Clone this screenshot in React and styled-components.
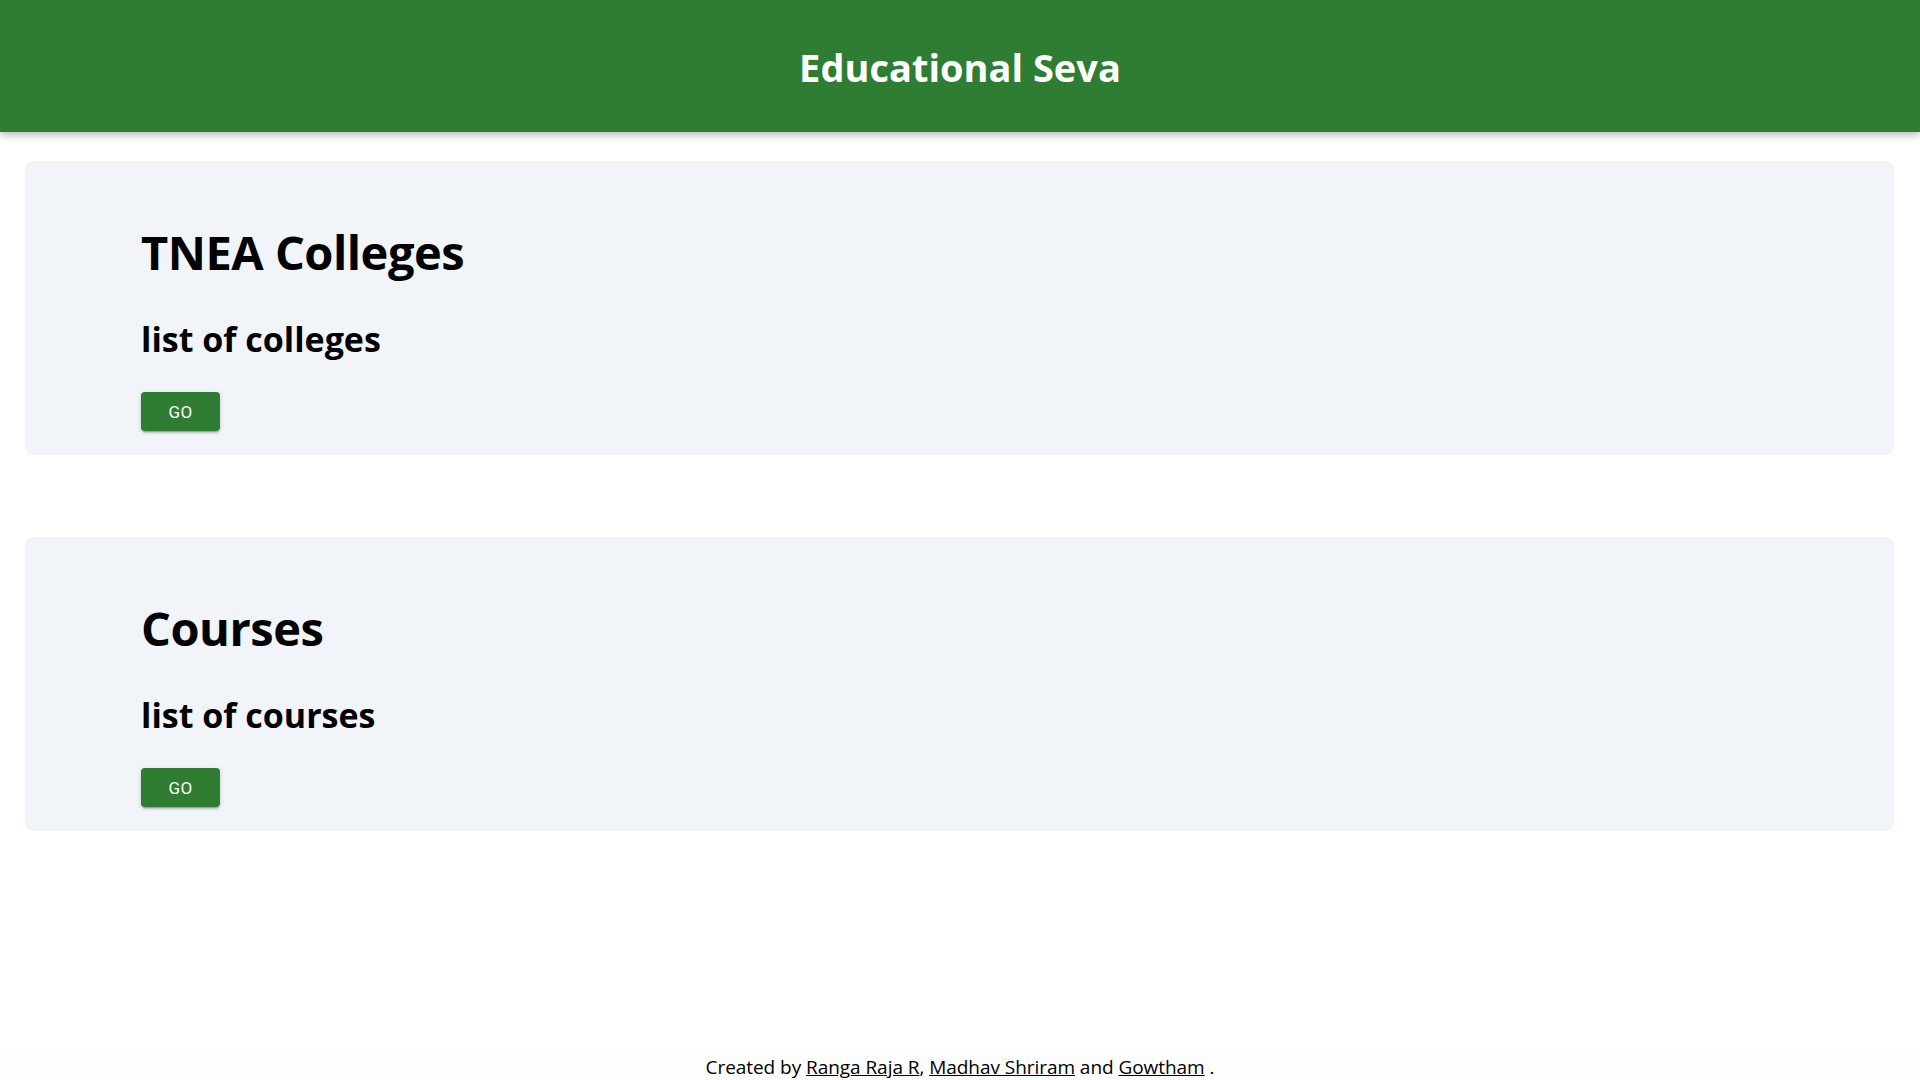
import React from "react";
import styled, { createGlobalStyle } from "styled-components";

const Global = createGlobalStyle`
  html, body { margin: 0; padding: 0; background: #ffffff; }
  body { font-family: "Open Sans", "Noto Sans", sans-serif; color: #000; }
  * { box-sizing: border-box; }
`;

const Page = styled.div`
  min-height: 100vh;
  display: flex;
  flex-direction: column;
`;

const Header = styled.header`
  height: 132px;
  background: #2e7d32;
  display: flex;
  align-items: center;
  justify-content: center;
  box-shadow: 0 3px 8px rgba(0, 0, 0, 0.28);
  position: relative;
  z-index: 1;
`;

const Title = styled.h1`
  margin: 0;
  color: #ffffff;
  font-size: 38px;
  font-weight: 700;
  letter-spacing: 0px;
  line-height: 46px;
  padding-top: 2px;
`;

const Main = styled.main`
  flex: 1;
  display: flex;
  flex-direction: column;
  gap: 82px;
  padding: 29px 26px 0 25px;
`;

const Card = styled.section`
  background: #f1f4f9;
  border-radius: 8px;
  padding: 62px 24px 24px 116px;
  display: flex;
  flex-direction: column;
  align-items: flex-start;
`;

const CardTitle = styled.h2`
  margin: 0;
  font-size: 47px;
  font-weight: 700;
  letter-spacing: -0.5px;
  line-height: 58px;
`;

const CardSub = styled.h3`
  margin: 38px 0 0;
  font-size: 34px;
  font-weight: 700;
  letter-spacing: 0px;
  line-height: 41px;
`;

const GoButton = styled.button`
  margin-top: 32px;
  width: 79px;
  height: 39px;
  border: none;
  border-radius: 4px;
  background: #2e7d32;
  color: #ffffff;
  font-family: Roboto, "Liberation Sans", sans-serif;
  font-size: 17px;
  font-weight: 400;
  letter-spacing: 0.4px;
  text-transform: uppercase;
  cursor: pointer;
  box-shadow: 0 3px 1px -2px rgba(0, 0, 0, 0.2), 0 2px 2px 0 rgba(0, 0, 0, 0.14),
    0 1px 5px 0 rgba(0, 0, 0, 0.12);
`;

const Footer = styled.footer`
  text-align: center;
  font-size: 19px;
  line-height: 26px;
  letter-spacing: -0.05px;
  padding: 0;
  background: #fdfdfd;
`;

const Link = styled.a`
  color: #000;
  text-decoration: underline;
`;

const sections = [
  { title: "TNEA Colleges", sub: "list of colleges" },
  { title: "Courses", sub: "list of courses" },
];

export default function App() {
  return (
    <Page>
      <Global />
      <Header>
        <Title>Educational Seva</Title>
      </Header>
      <Main>
        {sections.map((s) => (
          <Card key={s.title}>
            <CardTitle>{s.title}</CardTitle>
            <CardSub>{s.sub}</CardSub>
            <GoButton>GO</GoButton>
          </Card>
        ))}
      </Main>
      <Footer>
        Created by <Link href="#">Ranga Raja R</Link>,{" "}
        <Link href="#">Madhav Shriram</Link> and <Link href="#">Gowtham</Link> .
      </Footer>
    </Page>
  );
}
